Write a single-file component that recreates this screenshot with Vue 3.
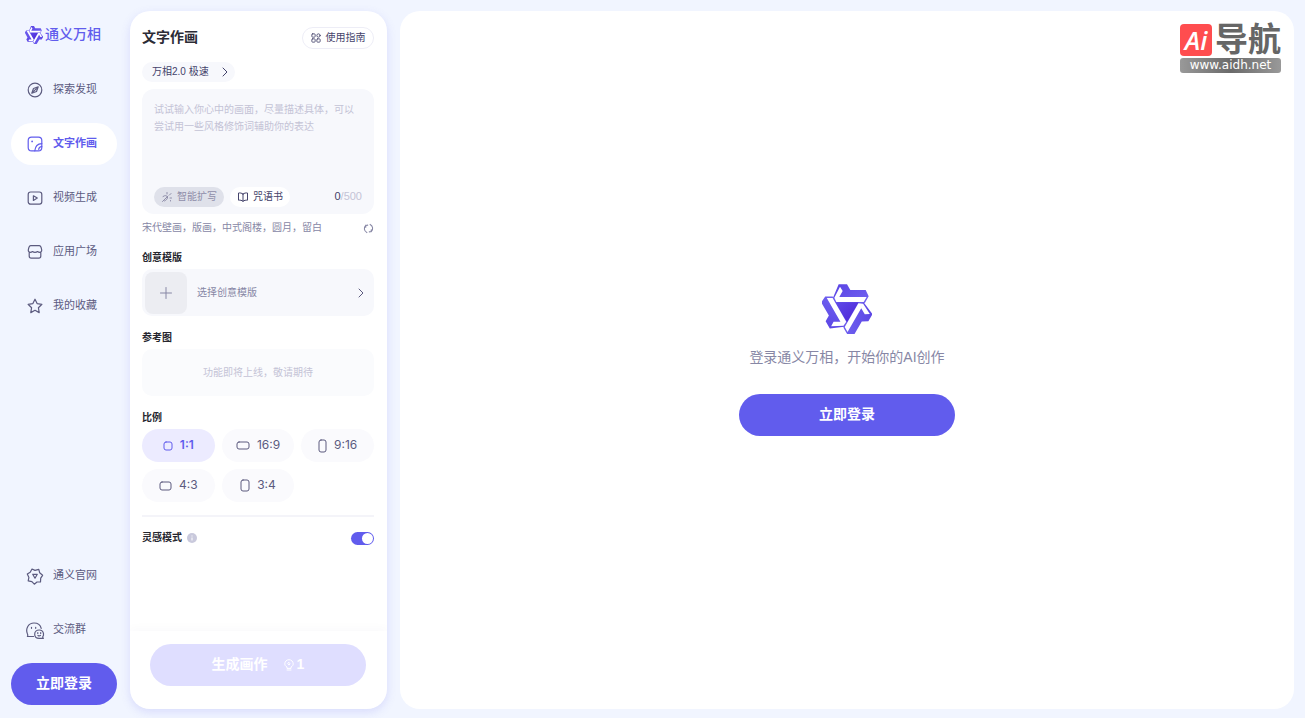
<script setup>
import { ref } from 'vue'

const angles = [0, 120, 240]
const ratio = ref('1:1')
const inspire = ref(true)
const prompt = ref('')

const navTop = [
  { label: '探索发现', icon: 'compass' },
  { label: '文字作画', icon: 'image', active: true },
  { label: '视频生成', icon: 'video' },
  { label: '应用广场', icon: 'shop' },
  { label: '我的收藏', icon: 'star' }
]
const navBottom = [
  { label: '通义官网', icon: 'site' },
  { label: '交流群', icon: 'chat' }
]
const icons = {
  compass: '<circle cx="9" cy="9" r="6.8"/><path d="M12.2 5.8 10.5 10.5 5.8 12.2 7.5 7.5ZM7.6 10.4l2.8-2.8"/>',
  image: '<rect x="2.2" y="2.2" width="13.6" height="13.6" rx="3.4"/><path d="M15.8 8.600c-4.200.2-6.600 2.900-7 7.200M15.800 11.600c-1.900.1-3 1.200-3.100 2.800"/><circle cx="6.100" cy="6.400" r=".9" fill="currentColor" stroke="none"/>',
  video: '<rect x="2.200" y="3" width="13.600" height="12.200" rx="2.400"/><path d="M7.400 6.800v4.600L11.300 9.100Z"/>',
  shop: '<path d="M4.800 2.600h8.400c1.300 0 2.200 2.200 2.500 4.400.1 1.400-.7 2.300-1.900 2.300-.9 0-1.700-.3-2.300-.8-.6.5-1.500.8-2.500.8s-1.900-.3-2.500-.8c-.6.5-1.400.8-2.300.8-1.200 0-2-.9-1.900-2.300C2.600 4.800 3.500 2.600 4.800 2.600ZM3.200 9.300v3.800c0 1.300.8 2.100 2 2.100h7.600c1.200 0 2-.8 2-2.100V9.300"/>',
  star: '<path d="m9 2.200 2.100 4.400 4.800.7-3.500 3.400.8 4.900L9 13.300l-4.200 2.300.8-4.900L2.100 7.300l4.800-.7Z"/>',
  site: '<path d="M6 2 9 3.400l3.800-1 .9 3.400 2.900 2.500-1.900 2.900-.2 3.700-3.500.1L8.300 17.200l-2.400-2.500-3.700-.8.7-3.500L1.300 7l2.900-1.700Z"/><path d="M6.700 7.300h4.600L9 11.200Z"/>',
  chat: '<path d="M7.600 15.500H1.400c.5-.8.6-1.600.1-2.500C-.9 7.500 2.500 2 8 2c3.700 0 6.500 2.200 7.200 5.400"/><path d="M16.700 15.900c.8-1 1-2 .8-3.200-.4-2.200-2.100-3.700-4.300-3.700-2.600 0-4.500 1.900-4.500 4.200 0 2.400 1.900 4.100 4.500 4.100h4.200c-.5-.4-.7-.8-.7-1.400Z"/><path d="M5.500 6.300v1M9.700 6.300v1M11.800 11.700v.8M14.700 11.700v.8M12 14.400c.8.6 1.800.6 2.500 0"/>'
}
const ratios = [
  { label: '1:1', w: 9, h: 9 },
  { label: '16:9', w: 13, h: 8 },
  { label: '9:16', w: 8, h: 13 },
  { label: '4:3', w: 12, h: 9 },
  { label: '3:4', w: 9, h: 12 }
]
</script>

<template>
  <div class="page">
    <svg class="defs" aria-hidden="true">
      <defs>
        <linearGradient id="arm" x1="0" y1="0" x2="1" y2="1">
          <stop offset="0" stop-color="#5a43e4" />
          <stop offset="1" stop-color="#7468f2" />
        </linearGradient>
        <linearGradient id="core" x1="0" y1="0" x2="1" y2="1">
          <stop offset="0" stop-color="#5f4be8" />
          <stop offset="1" stop-color="#4c22d6" />
        </linearGradient>
        <symbol id="brand" viewBox="0 0 150 150">
          <path
            v-for="a in angles"
            :key="'p' + a"
            :transform="`rotate(${a} 75 75)`"
            d="M50 1H75L85 18H131L140 37 129 56 75 76 33 41Z"
            fill="url(#arm)"
          />
          <path d="M40 55H110L75 115Z" fill="url(#core)" />
          <path
            v-for="a in angles"
            :key="'w' + a"
            :transform="`rotate(${a} 75 75)`"
            d="M54 8 62 21 52 39H134L125 54H43L37 41Z"
            fill="#fff"
          />
        </symbol>
      </defs>
    </svg>

    <aside class="sidebar">
      <a class="brand" href="#"><svg><use href="#brand" /></svg><span>通义万相</span></a>
      <nav class="nav">
        <a v-for="n in navTop" :key="n.label" href="#" :class="['nav-item', { active: n.active }]">
          <svg viewBox="0 0 18 18" class="line" v-html="icons[n.icon]"></svg>{{ n.label }}
        </a>
      </nav>
      <nav class="nav nav-bottom">
        <a v-for="n in navBottom" :key="n.label" href="#" class="nav-item">
          <svg viewBox="0 0 18 18" class="line" v-html="icons[n.icon]"></svg>{{ n.label }}
        </a>
      </nav>
      <button class="primary side-login" type="button">立即登录</button>
    </aside>

    <section class="panel">
      <div class="panel-body">
        <header class="head">
          <h1>文字作画</h1>
          <button class="guide" type="button">
            <svg viewBox="0 0 12 12" class="line"><rect x="1" y="1" width="4" height="4" rx="1" /><circle cx="9" cy="3" r="2" /><rect x="1" y="7" width="4" height="4" rx="1" /><rect x="7" y="7" width="4" height="4" rx="1" /></svg>
            使用指南
          </button>
        </header>

        <button class="model" type="button">
          万相2.0 极速
          <svg viewBox="0 0 10 10" class="line"><path d="m3 1 4 4-4 4" /></svg>
        </button>

        <div class="prompt">
          <textarea v-model="prompt" aria-label="画面描述" maxlength="500" placeholder="试试输入你心中的画面，尽量描述具体，可以尝试用一些风格修饰词辅助你的表达"></textarea>
          <div class="tools">
            <button class="chip muted" type="button">
              <svg viewBox="0 0 12 12" class="line"><path d="m1.500 10.500 5.500-5.500M2 5.500c2-1.500 4-1 4.500.5S5 9.500 3.500 10M6 3V1.500M8.500 4 10 2.500M9 7h1.500M9.500 9.500v.5" /></svg>
              智能扩写
            </button>
            <button class="chip" type="button">
              <svg viewBox="0 0 12 12" class="line"><path d="M6 3C4.800 2 3 1.800 1.500 2v7.200c1.700-.2 3.300.1 4.500 1.100 1.200-1 2.800-1.300 4.500-1.100V2C9 1.800 7.200 2 6 3ZM6 3v7.300" /></svg>
              咒语书
            </button>
            <span class="count"><b>{{ prompt.length }}</b>/500</span>
          </div>
        </div>

        <div class="tags">
          <span>宋代壁画，版画，中式阁楼，圆月，留白</span>
          <button type="button" aria-label="换一批">
            <svg viewBox="0 0 10 10" class="line"><path d="M3.500 8.700A4 4 0 0 1 2.500 2.200M2.500 2.200l1.800-.3M2.500 2.200v1.600M6.500 1.300a4 4 0 0 1 1 6.500M7.500 7.800l-1.800.3M7.500 7.800V6.200" /></svg>
          </button>
        </div>

        <h2>创意模版</h2>
        <button class="template" type="button">
          <span class="plus"><svg viewBox="0 0 12 12" class="line"><path d="M6 .5v11M.5 6h11" /></svg></span>
          <span class="template-text">选择创意模版</span>
          <svg viewBox="0 0 10 10" class="line arrow"><path d="m3 1 4 4-4 4" /></svg>
        </button>

        <h2>参考图</h2>
        <div class="soon">功能即将上线，敬请期待</div>

        <h2 id="ratio-title">比例</h2>
        <div class="ratios" role="radiogroup" aria-labelledby="ratio-title">
          <label v-for="r in ratios" :key="r.label" :class="['ratio', { on: ratio === r.label }]">
            <input v-model="ratio" type="radio" name="ratio" :value="r.label" />
            <svg :width="r.w + 1" :height="r.h + 1" class="line"><rect x="1" y="1" :width="r.w - 1" :height="r.h - 1" rx="2" /></svg>
            {{ r.label }}
          </label>
        </div>

        <div class="inspire">
          <label for="inspire">灵感模式</label>
          <svg class="info" viewBox="0 0 10 10"><circle cx="5" cy="5" r="5" fill="#c9c9dc" /><path d="M5 4.500v3M5 2.500v1" stroke="#fff" /></svg>
          <input id="inspire" v-model="inspire" type="checkbox" class="switch" />
        </div>
      </div>

      <footer class="panel-foot">
        <button class="generate" type="button">
          <span>生成画作</span>
          <span class="cost">
            <svg viewBox="0 0 12 12" class="line"><path d="M4 9V8C2.500 7.200 1.800 6.200 1.800 4.900a4.200 4.200 0 0 1 8.400 0C10.200 6.200 9.500 7.200 8 8v1ZM4 11h4M6 3.500l1 1.300-1 1.300-1-1.300Z" /></svg>1
          </span>
        </button>
      </footer>
    </section>

    <main class="stage">
      <div class="watermark">
        <div class="mark-top"><span class="ai">Ai</span><span class="dh">导航</span></div>
        <div class="mark-url">www.aidh.net</div>
      </div>
      <div class="welcome">
        <svg class="big-logo"><use href="#brand" /></svg>
        <p>登录通义万相，开始你的AI创作</p>
        <button class="primary main-login" type="button">立即登录</button>
      </div>
    </main>
  </div>
</template>

<style>
body {
  margin: 0;
  background: #f1f5ff;
}
</style>

<style scoped>
* {
  box-sizing: border-box;
}
.page {
  display: flex;
  min-height: 100vh;
  padding: 11px 11px 9px 0;
  background: #f1f5ff;
  font-family: "Liberation Sans", "Noto Sans CJK SC", sans-serif;
  font-size: 10px;
  line-height: 1.4;
  color: #26244c;
}
.defs {
  position: absolute;
  width: 0;
  height: 0;
}
button {
  border: 0;
  padding: 0;
  font: inherit;
  color: inherit;
  background: none;
  cursor: pointer;
}
a {
  text-decoration: none;
}
.line {
  flex: none;
  fill: none;
  stroke: currentColor;
  stroke-width: 1;
  stroke-linecap: round;
  stroke-linejoin: round;
}
.sidebar {
  width: 130px;
  flex: none;
  display: flex;
  flex-direction: column;
  padding: 0 13px 4px 11px;
}
.brand {
  display: flex;
  align-items: center;
  gap: 2px;
  height: 48px;
  padding-left: 14px;
  color: #615ced;
  font-size: 14px;
  font-weight: 500;
}
.brand svg {
  width: 18px;
  height: 18px;
}
.nav {
  display: flex;
  flex-direction: column;
  gap: 12px;
  margin-top: 10px;
}
.nav-item {
  display: flex;
  align-items: center;
  gap: 9px;
  height: 42px;
  padding-left: 15px;
  border-radius: 21px;
  color: #5c5b7f;
  font-size: 11px;
}
.nav-item svg {
  width: 18px;
  height: 18px;
  overflow: visible;
  stroke-width: 1.2;
}
.nav-item.active {
  background: #fff;
  color: #615ced;
  font-weight: 700;
}
.nav-bottom {
  margin-top: auto;
  margin-bottom: 12px;
}
.primary {
  height: 42px;
  border-radius: 21px;
  background: #615ced;
  color: #fff;
  font-size: 14px;
  font-weight: 700;
}
.panel {
  width: 257px;
  flex: none;
  display: flex;
  flex-direction: column;
  border-radius: 20px;
  background: #fff;
  box-shadow: 0 3px 10px rgba(97, 92, 237, 0.17);
  overflow: hidden;
}
.panel-body {
  flex: 1;
  display: flex;
  flex-direction: column;
  padding: 16px 13px 0 12px;
}
.head {
  display: flex;
  justify-content: space-between;
  align-items: center;
  height: 22px;
}
h1 {
  margin: 0;
  font-size: 14px;
  font-weight: 700;
  color: #2c2c36;
}
.guide {
  display: flex;
  align-items: center;
  justify-content: center;
  gap: 5px;
  width: 72px;
  height: 22px;
  border: 1px solid #ededf6;
  border-radius: 11px;
  color: #44436b;
}
.guide svg {
  width: 10px;
  height: 10px;
}
.model {
  display: flex;
  align-items: center;
  align-self: flex-start;
  gap: 11px;
  height: 20px;
  margin-top: 13px;
  padding: 0 5px 0 10px;
  border-radius: 10px;
  background: #f7f8fc;
  color: #44436b;
}
.model svg,
.arrow {
  width: 10px;
  height: 10px;
}
.prompt {
  margin-top: 7px;
  padding: 12px 12px 7px;
  border-radius: 12px;
  background: #f7f8fc;
}
textarea {
  display: block;
  width: 100%;
  height: 86px;
  border: 0;
  padding: 0;
  resize: none;
  outline: none;
  background: none;
  font: inherit;
  line-height: 17px;
  color: #26244c;
  overflow: hidden;
}
textarea::placeholder {
  color: #c4c3d6;
  opacity: 1;
}
.tools {
  display: flex;
  align-items: center;
  gap: 6px;
}
.chip {
  display: flex;
  align-items: center;
  gap: 4px;
  height: 20px;
  padding: 0 7px;
  border-radius: 10px;
  background: #fff;
  color: #44436b;
}
.chip svg {
  width: 12px;
  height: 12px;
}
.chip.muted {
  background: #dfe1ea;
  color: #8f8ea9;
}
.count {
  margin-left: auto;
  font-size: 11px;
  color: #c4c3d6;
}
.count b {
  font-weight: 400;
  color: #44436b;
}
.tags {
  display: flex;
  align-items: center;
  justify-content: space-between;
  height: 28px;
  color: #8787a5;
}
.tags button {
  display: flex;
}
.tags svg {
  width: 11px;
  height: 11px;
}
h2 {
  display: flex;
  align-items: center;
  height: 20px;
  margin: 12px 0 0;
  font-size: 10px;
  font-weight: 700;
  color: #26262e;
}
.tags + h2 {
  margin-top: 6px;
}
h2 + * {
  margin-top: 1px;
}
.template {
  display: flex;
  align-items: center;
  height: 47px;
  padding: 0 8px 0 3px;
  border-radius: 10px;
  background: #f7f8fc;
  color: #8787a5;
}
.plus {
  display: flex;
  align-items: center;
  justify-content: center;
  width: 42px;
  height: 42px;
  border-radius: 8px;
  background: #ecedf2;
}
.plus svg {
  width: 12px;
  height: 12px;
}
.template-text {
  margin-left: 10px;
}
.arrow {
  margin-left: auto;
  color: #5c5b7f;
}
.soon {
  display: flex;
  align-items: center;
  justify-content: center;
  height: 47px;
  border-radius: 10px;
  background: #fafbfd;
  color: #c4c3d6;
}
.ratios {
  display: grid;
  grid-template-columns: repeat(3, 1fr);
  gap: 7px;
}
.ratio {
  display: flex;
  align-items: center;
  justify-content: center;
  gap: 7px;
  height: 33px;
  border-radius: 17px;
  background: #fafafd;
  color: #5c5b7f;
  font-family: Inter, "Liberation Sans", sans-serif;
  font-size: 12px;
  cursor: pointer;
}
.ratio input {
  position: absolute;
  opacity: 0;
  width: 0;
  height: 0;
  margin: 0;
}
.ratio.on {
  background: #ecebff;
  color: #615ced;
  font-weight: 600;
}
.inspire {
  display: flex;
  align-items: center;
  gap: 5px;
  margin-top: 13px;
  padding-top: 14px;
  border-top: 2px solid #f4f4f9;
  font-weight: 700;
  color: #26262e;
}
.info {
  width: 10px;
  height: 10px;
}
.switch {
  appearance: none;
  display: flex;
  align-items: center;
  width: 23px;
  height: 13px;
  margin: 0 0 0 auto;
  padding: 0 1px;
  border-radius: 7px;
  background: #c9c9dc;
  cursor: pointer;
}
.switch::before {
  content: "";
  width: 11px;
  height: 11px;
  border-radius: 50%;
  background: #fff;
}
.switch:checked {
  justify-content: flex-end;
  background: #615ced;
}
.panel-foot {
  padding: 13px 21px 23px 20px;
  box-shadow: 0 -4px 8px rgba(60, 60, 110, 0.02);
}
.generate {
  display: flex;
  align-items: center;
  justify-content: center;
  gap: 15px;
  width: 100%;
  height: 42px;
  border-radius: 21px;
  background: #dfdeff;
  color: #fff;
  font-size: 14px;
  font-weight: 700;
}
.cost {
  display: flex;
  align-items: center;
  gap: 2px;
}
.cost svg {
  width: 12px;
  height: 12px;
}
.stage {
  flex: 1;
  display: flex;
  flex-direction: column;
  align-items: center;
  justify-content: center;
  position: relative;
  margin-left: 13px;
  border-radius: 20px;
  background: #fff;
}
.welcome {
  display: flex;
  flex-direction: column;
  align-items: center;
}
.big-logo {
  width: 50px;
  height: 50px;
}
.welcome p {
  margin: 13px 0 27px;
  font-size: 14px;
  line-height: 20px;
  color: #8787a5;
}
.main-login {
  width: 216px;
}
.watermark {
  position: absolute;
  top: 13px;
  right: 13px;
  width: 101px;
}
.mark-top {
  display: flex;
  justify-content: space-between;
  align-items: center;
  height: 32px;
}
.ai {
  width: 32px;
  height: 32px;
  border-radius: 4px;
  background: #ff4d4f;
  color: #fff;
  font-family: "Open Sans", sans-serif;
  font-size: 26px;
  font-style: italic;
  font-weight: 600;
  line-height: 32px;
  text-align: center;
}
.dh {
  font-size: 33px;
  font-weight: 700;
  line-height: 34px;
  color: #666;
}
.mark-url {
  height: 15px;
  margin-top: 2px;
  border-radius: 3px;
  background: linear-gradient(90deg, #999, #6a6a6a 50%, #999);
  color: #fff;
  font-family: "DejaVu Sans", sans-serif;
  font-size: 12px;
  line-height: 15px;
  text-align: center;
}
</style>
